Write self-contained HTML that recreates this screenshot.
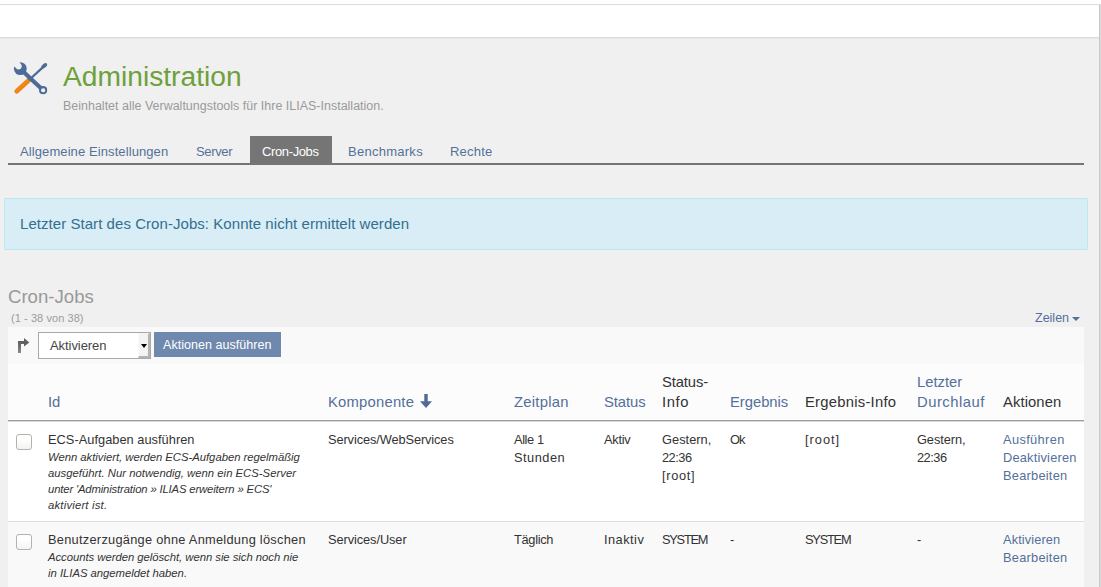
<!DOCTYPE html>
<html><head><meta charset="utf-8">
<style>
*{margin:0;padding:0;box-sizing:border-box}
html,body{width:1101px;height:587px;overflow:hidden;background:#f0f0f0;font-family:"Liberation Sans",sans-serif;color:#333}
.b{position:absolute}
.t{position:absolute;white-space:nowrap}
.title{font-size:28.2px;color:#6ea03c;line-height:36px}
.sub{font-size:12.45px;color:#9a9a9a;line-height:16px}
.tab{font-size:13px;color:#53709a;line-height:31px}
.tab.act{color:#fff}
.alert{font-size:15px;color:#31708f;line-height:18px}
.h2{font-size:18.6px;color:#999;line-height:22px}
.cnt{font-size:11px;color:#9c9c9c;line-height:14px}
.zeilen{font-size:12.5px;color:#53709a;line-height:16px}
.seltxt{font-size:13px;color:#444;line-height:16px}
.btntxt{font-size:12.5px;color:#fff;line-height:18px}
.hd{font-size:14.8px;line-height:19px;color:#53709a}
.hd.dk{color:#333}
.td{font-size:12.8px;line-height:18px;color:#333}
.td.lk{color:#53709a}
.desc{font-style:italic;font-size:11.3px;line-height:16px;color:#333}
.cb{position:absolute;left:16px;width:16px;height:16px;border:1px solid #b7b1ac;border-radius:3px;background:linear-gradient(#ffffff 30%,#f3f3f3)}

</style></head><body>
<div class="b" style="left:0;top:0;width:1101px;height:4px;background:#fff"></div>
<div class="b" style="left:0;top:4px;width:1101px;height:1px;background:#dcdcdc"></div>
<div class="b" style="left:0;top:5px;width:1099px;height:32px;background:#fff"></div>
<div class="b" style="left:0;top:37px;width:1099px;height:1px;background:#dcdcdc"></div>
<div class="b" style="left:0;top:38px;width:1099px;height:1px;background:#e7e7e7"></div>
<div class="b" style="left:1099px;top:5px;width:1px;height:582px;background:#ccc8c4"></div>
<div class="b" style="left:1100px;top:5px;width:1px;height:582px;background:#dadada"></div>

<svg class="b" style="left:0;top:0" width="60" height="100" viewBox="0 0 60 100">
  <defs><linearGradient id="og" x1="0" y1="0" x2="1" y2="1"><stop offset="0" stop-color="#f99520"/><stop offset="1" stop-color="#ea760e"/></linearGradient></defs>
  <line x1="16.7" y1="91.2" x2="29" y2="80" stroke="url(#og)" stroke-width="4.8" stroke-linecap="round"/>
  <line x1="29" y1="80" x2="42.5" y2="67.6" stroke="#4d6b98" stroke-width="2.3"/>
  <ellipse cx="44.2" cy="65.8" rx="3.5" ry="1.9" transform="rotate(-42 44.2 65.8)" fill="#4d6b98"/>
  <line x1="21" y1="69.5" x2="43.1" y2="90.2" stroke="#4d6b98" stroke-width="4.2"/>
  <circle cx="43.1" cy="90.2" r="3.05" fill="none" stroke="#4d6b98" stroke-width="2.1"/>
  <circle cx="43.1" cy="90.2" r="2" fill="#f0f0f0"/>
  <circle cx="20.3" cy="68.6" r="6.4" fill="#4d6b98"/>
  <circle cx="18.6" cy="66.3" r="3.1" fill="#f0f0f0"/>
  <polygon points="20.84,64.46 16.59,56.30 9.18,62.40 16.36,68.14" fill="#f0f0f0"/>
</svg>

<div class="b" style="left:250px;top:136px;width:82px;height:27px;background:#757575"></div>
<div class="b" style="left:8px;top:163px;width:1076px;height:2px;background:#757575"></div>

<div class="b" style="left:4px;top:198px;width:1084px;height:52px;background:#d9edf7;border:1px solid #bce8f1"></div>

<div class="b" style="left:1072px;top:317px;width:0;height:0;border-left:4px solid transparent;border-right:4px solid transparent;border-top:4px solid #53709a"></div>

<div class="b" style="left:8px;top:327px;width:1076px;height:260px;background:#fff"></div>
<div class="b" style="left:8px;top:327px;width:1076px;height:37px;background:#f9f9f9"></div>
<div class="b" style="left:8px;top:364px;width:1076px;height:55px;background:#fcfcfc"></div>
<div class="b" style="left:8px;top:420px;width:1076px;height:1px;background:#9c9c9c"></div>
<div class="b" style="left:8px;top:421px;width:1076px;height:1px;background:#dadada"></div>
<div class="b" style="left:8px;top:521px;width:1076px;height:1px;background:#dddddd"></div>
<div class="b" style="left:8px;top:522px;width:1076px;height:65px;background:#f9f9f9"></div>

<svg class="b" style="left:14px;top:334px" width="20" height="22" viewBox="0 0 20 22">
  <defs><linearGradient id="ag" x1="0" y1="0" x2="0" y2="1"><stop offset="0" stop-color="#5c5c5c"/><stop offset="1" stop-color="#8a8a8a"/></linearGradient></defs>
  <path d="M4 19 V7 H10.5 V10 H7 V19 Z" fill="url(#ag)"/>
  <path d="M10 4 L15.3 8.5 L10 12.5 Z" fill="#606060"/>
</svg>
<div class="b" style="left:38px;top:332px;width:113px;height:27px;background:#fff;border:1px solid #a9a9a9"></div>
<div class="b" style="left:138px;top:333px;width:12px;height:25px;background:#f4f3f1;border-right:2px solid #b4b4b4;border-bottom:2px solid #b4b4b4;border-top:1px solid #f4f3f1;border-left:1px solid #fafafa"></div>
<div class="b" style="left:141px;top:344px;width:0;height:0;border-left:3px solid transparent;border-right:3px solid transparent;border-top:4px solid #000"></div>
<div class="b" style="left:154px;top:332px;width:127px;height:25px;background:#6f89ae"></div>

<svg class="b" style="left:419px;top:394px" width="14" height="15" viewBox="0 0 14 15"><path d="M7 0 V9" stroke="#4f6a94" stroke-width="3.4"/><path d="M1 7.3 L7 14 L13 7.3 Z" fill="#4f6a94"/></svg>

<div class="cb" style="top:434px"></div>
<div class="cb" style="top:534px"></div>

<div id="t0" class="t title" style="left:63px;top:58px;">Administration</div>
<div id="t1" class="t sub" style="left:63px;top:98px;letter-spacing:0.021px;">Beinhaltet alle Verwaltungstools für Ihre ILIAS-Installation.</div>
<div id="t2" class="t tab" style="left:20px;top:136px;letter-spacing:0.095px;">Allgemeine Einstellungen</div>
<div id="t3" class="t tab" style="left:196px;top:136px;letter-spacing:-0.360px;">Server</div>
<div id="t4" class="t tab act" style="left:262px;top:136px;letter-spacing:-0.374px;">Cron-Jobs</div>
<div id="t5" class="t tab" style="left:348px;top:136px;letter-spacing:0.265px;">Benchmarks</div>
<div id="t6" class="t tab" style="left:450px;top:136px;letter-spacing:0.200px;">Rechte</div>
<div id="t7" class="t alert" style="left:20px;top:215px;letter-spacing:0.053px;">Letzter Start des Cron-Jobs: Konnte nicht ermittelt werden</div>
<div id="t8" class="t h2" style="left:8px;top:286px;letter-spacing:0.001px;">Cron-Jobs</div>
<div id="t9" class="t cnt" style="left:11px;top:311px;letter-spacing:0.071px;">(1 - 38 von 38)</div>
<div id="t10" class="t zeilen" style="left:1035px;top:310px;">Zeilen</div>
<div id="t11" class="t seltxt" style="left:50px;top:338px;letter-spacing:-0.069px;">Aktivieren</div>
<div id="t12" class="t btntxt" style="left:163px;top:336px;letter-spacing:0.048px;">Aktionen ausführen</div>
<div id="t13" class="t hd" style="left:48px;top:393px;">Id</div>
<div id="t14" class="t hd" style="left:328px;top:393px;letter-spacing:0.222px;">Komponente</div>
<div id="t15" class="t hd" style="left:514px;top:393px;letter-spacing:0.255px;">Zeitplan</div>
<div id="t16" class="t hd" style="left:604px;top:393px;letter-spacing:-0.080px;">Status</div>
<div id="t17" class="t hd dk" style="left:662px;top:373px;letter-spacing:-0.133px;">Status-</div>
<div id="t18" class="t hd dk" style="left:662px;top:393px;letter-spacing:0.600px;">Info</div>
<div id="t19" class="t hd" style="left:730px;top:393px;letter-spacing:-0.028px;">Ergebnis</div>
<div id="t20" class="t hd dk" style="left:805px;top:393px;letter-spacing:0.250px;">Ergebnis-Info</div>
<div id="t21" class="t hd" style="left:917px;top:373px;">Letzter</div>
<div id="t22" class="t hd" style="left:917px;top:393px;letter-spacing:0.500px;">Durchlauf</div>
<div id="t23" class="t hd dk" style="left:1003px;top:393px;letter-spacing:0.087px;">Aktionen</div>
<div id="t24" class="t td" style="left:48px;top:431px;letter-spacing:0.030px;">ECS-Aufgaben ausführen</div>
<div id="t25" class="t desc" style="left:48px;top:449px;letter-spacing:-0.022px;">Wenn aktiviert, werden ECS-Aufgaben regelmäßig</div>
<div id="t26" class="t desc" style="left:48px;top:465px;letter-spacing:0.012px;">ausgeführt. Nur notwendig, wenn ein ECS-Server</div>
<div id="t27" class="t desc" style="left:48px;top:481px;letter-spacing:-0.153px;">unter 'Administration » ILIAS erweitern » ECS'</div>
<div id="t28" class="t desc" style="left:48px;top:497px;letter-spacing:0.199px;">aktiviert ist.</div>
<div id="t29" class="t td" style="left:328px;top:431px;letter-spacing:-0.105px;">Services/WebServices</div>
<div id="t30" class="t td" style="left:514px;top:431px;letter-spacing:-0.400px;">Alle 1</div>
<div id="t31" class="t td" style="left:514px;top:449px;letter-spacing:0.500px;">Stunden</div>
<div id="t32" class="t td" style="left:604px;top:431px;letter-spacing:-0.250px;">Aktiv</div>
<div id="t33" class="t td" style="left:662px;top:431px;letter-spacing:0.028px;">Gestern,</div>
<div id="t34" class="t td" style="left:662px;top:449px;letter-spacing:-0.500px;">22:36</div>
<div id="t35" class="t td" style="left:662px;top:467px;letter-spacing:0.680px;">[root]</div>
<div id="t36" class="t td" style="left:730px;top:431px;letter-spacing:-1.000px;">Ok</div>
<div id="t37" class="t td" style="left:805px;top:431px;letter-spacing:1.000px;">[root]</div>
<div id="t38" class="t td" style="left:917px;top:431px;letter-spacing:-0.087px;">Gestern,</div>
<div id="t39" class="t td" style="left:917px;top:449px;letter-spacing:-0.500px;">22:36</div>
<div id="t40" class="t td lk" style="left:1003px;top:431px;letter-spacing:0.375px;">Ausführen</div>
<div id="t41" class="t td lk" style="left:1003px;top:449px;letter-spacing:0.202px;">Deaktivieren</div>
<div id="t42" class="t td lk" style="left:1003px;top:467px;letter-spacing:0.246px;">Bearbeiten</div>
<div id="t43" class="t td" style="left:48px;top:531px;letter-spacing:0.270px;">Benutzerzugänge ohne Anmeldung löschen</div>
<div id="t44" class="t desc" style="left:48px;top:549px;letter-spacing:-0.033px;">Accounts werden gelöscht, wenn sie sich noch nie</div>
<div id="t45" class="t desc" style="left:48px;top:565px;letter-spacing:-0.016px;">in ILIAS angemeldet haben.</div>
<div id="t46" class="t td" style="left:328px;top:531px;letter-spacing:-0.083px;">Services/User</div>
<div id="t47" class="t td" style="left:514px;top:531px;letter-spacing:-0.300px;">Täglich</div>
<div id="t48" class="t td" style="left:604px;top:531px;letter-spacing:0.468px;">Inaktiv</div>
<div id="t49" class="t td" style="left:662px;top:531px;letter-spacing:-1.240px;">SYSTEM</div>
<div id="t50" class="t td" style="left:730px;top:531px;">-</div>
<div id="t51" class="t td" style="left:805px;top:531px;letter-spacing:-1.200px;">SYSTEM</div>
<div id="t52" class="t td" style="left:917px;top:531px;">-</div>
<div id="t53" class="t td lk" style="left:1003px;top:531px;letter-spacing:0.111px;">Aktivieren</div>
<div id="t54" class="t td lk" style="left:1003px;top:549px;letter-spacing:0.246px;">Bearbeiten</div>
</body></html>
